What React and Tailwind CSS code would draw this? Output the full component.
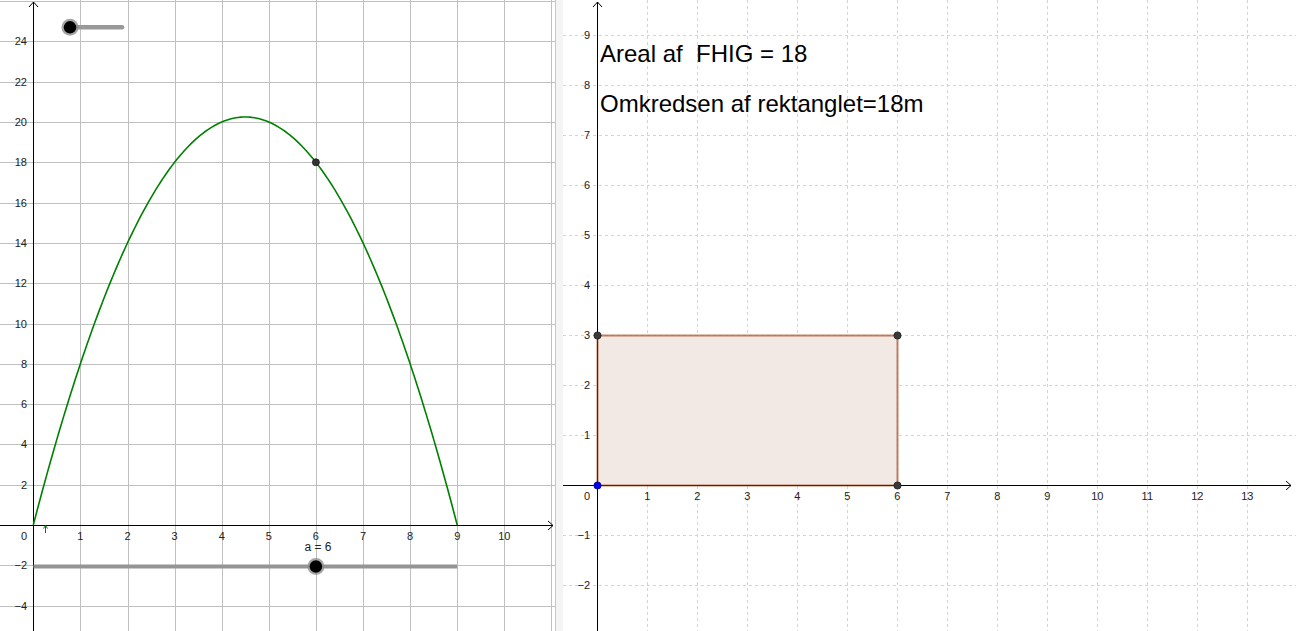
import React from 'react';

// left view: area function f(x) = x(9 - x)
const L = { ox: 33.3, oy: 525, ux: 47.1, uy: 20.15 };
// right view: rectangle
const R = { ox: 34.3, oy: 485, u: 50 };

const lx = (x) => L.ox + L.ux * x;
const ly = (y) => L.oy - L.uy * y;
const rx = (x) => R.ox + R.u * x;
const ry = (y) => R.oy - R.u * y;

const parabola = () => {
  const pts = [];
  for (let i = 0; i <= 180; i++) {
    const x = (9 * i) / 180;
    pts.push(`${lx(x).toFixed(2)},${ly(x * (9 - x)).toFixed(2)}`);
  }
  return 'M' + pts.join(' L');
};

const minus = (n) => (n < 0 ? '\u2212' + Math.abs(n) : String(n));

const LeftView = () => {
  const vx = [1, 2, 3, 4, 5, 6, 7, 8, 9, 10, 11];
  const hy = [-4, -2, 2, 4, 6, 8, 10, 12, 14, 16, 18, 20, 22, 24, 26];
  return (
    <svg width="555" height="631" className="block">
      {vx.map((k) => (
        <line key={'v' + k} x1={Math.round(lx(k)) + 0.5} x2={Math.round(lx(k)) + 0.5} y1="0" y2="631" stroke="#c0c0c0" strokeWidth="1" />
      ))}
      {hy.map((k) => (
        <line key={'h' + k} x1="0" x2="555" y1={Math.round(ly(k)) + 0.5} y2={Math.round(ly(k)) + 0.5} stroke="#c0c0c0" strokeWidth="1" />
      ))}

      {/* axes */}
      <line x1="33.5" x2="33.5" y1="2" y2="631" stroke="#000" strokeWidth="1" />
      <polyline points="29,7 33.5,2 38,7" fill="none" stroke="#000" strokeWidth="1" />
      <line x1="0" x2="553" y1="525.5" y2="525.5" stroke="#000" strokeWidth="1" />
      <polyline points="548,521 553,525.5 548,530" fill="none" stroke="#000" strokeWidth="1" />

      {/* labels */}
      <g fontSize="11" fill="#222">
        {[1, 2, 3, 4, 5, 6, 7, 8, 9, 10].map((k) => (
          <text key={'xl' + k} x={lx(k)} y="539.5" textAnchor="middle">{k}</text>
        ))}
        <text x="27" y="539.5" textAnchor="end">0</text>
        {hy.filter((k) => k !== 26).map((k) => (
          <text key={'yl' + k} x="27" y={ly(k) + 4} textAnchor="end">{minus(k)}</text>
        ))}
      </g>

      {/* graph */}
      <path d={parabola()} fill="none" stroke="#008000" strokeWidth="1.6" />
      <line x1="45.5" x2="45.5" y1="533" y2="526" stroke="#008000" strokeWidth="1" />
      <polyline points="43.5,528.5 45.5,525.5 47.5,528.5" fill="none" stroke="#008000" strokeWidth="1" />
      <circle cx={lx(6)} cy={ly(18)} r="3.5" fill="#333" stroke="#1a1a1a" strokeWidth="0.8" />

      {/* top slider */}
      <line x1="70" x2="122" y1="27.3" y2="27.3" stroke="#999" strokeWidth="4.5" strokeLinecap="round" />
      <circle cx="70" cy="27.3" r="8.5" fill="#888" opacity="0.75" />
      <circle cx="70" cy="27.3" r="6.2" fill="#000" />

      {/* bottom slider a */}
      <line x1="33.5" x2={lx(9)} y1="566.5" y2="566.5" stroke="#959595" strokeWidth="4" />
      <text x={lx(6) + 2} y="550.5" fontSize="12" fill="#222" textAnchor="middle">a = 6</text>
      <circle cx={lx(6)} cy="566.5" r="8.5" fill="#888" opacity="0.75" />
      <circle cx={lx(6)} cy="566.5" r="6.2" fill="#000" />
    </svg>
  );
};

const RightView = () => {
  const vx = [1, 2, 3, 4, 5, 6, 7, 8, 9, 10, 11, 12, 13];
  const hy = [-2, -1, 1, 2, 3, 4, 5, 6, 7, 8, 9];
  return (
    <svg width="733" height="631" className="block">
      {vx.map((k) => (
        <line key={'v' + k} x1={Math.round(rx(k)) + 0.5} x2={Math.round(rx(k)) + 0.5} y1="0" y2="631" stroke="#d4d4d4" strokeWidth="1" strokeDasharray="3,3" />
      ))}
      {hy.map((k) => (
        <line key={'h' + k} x1="0" x2="733" y1={ry(k) + 0.5} y2={ry(k) + 0.5} stroke="#d4d4d4" strokeWidth="1" strokeDasharray="3,3" />
      ))}

      {/* rectangle FHIG */}
      <rect x="34.5" y="335.5" width="300" height="150" fill="#f3e9e4" />

      {/* axes */}
      <line x1="34.5" x2="34.5" y1="2" y2="631" stroke="#000" strokeWidth="1" />
      <polyline points="30,7 34.5,2 39,7" fill="none" stroke="#000" strokeWidth="1" />
      <line x1="0" x2="728" y1="485.5" y2="485.5" stroke="#000" strokeWidth="1" />
      <polyline points="723,481 728,485.5 723,490" fill="none" stroke="#000" strokeWidth="1" />

      <rect x="34.5" y="335.5" width="300" height="150" fill="none" stroke="#993300" strokeOpacity="0.6" strokeWidth="2" />

      {/* labels */}
      <g fontSize="11" fill="#222">
        {vx.map((k) => (
          <text key={'xl' + k} x={rx(k)} y="499.5" textAnchor="middle">{k}</text>
        ))}
        <text x="27" y="499.5" textAnchor="end">0</text>
        {hy.map((k) => (
          <text key={'yl' + k} x="27" y={ry(k) + 4} textAnchor="end">{minus(k)}</text>
        ))}
      </g>

      {/* points */}
      <circle cx="34.5" cy="335.5" r="3.6" fill="#3a3a3a" stroke="#1a1a1a" strokeWidth="0.8" />
      <circle cx="334.5" cy="335.5" r="3.6" fill="#3a3a3a" stroke="#1a1a1a" strokeWidth="0.8" />
      <circle cx="334.5" cy="485.5" r="3.6" fill="#3a3a3a" stroke="#1a1a1a" strokeWidth="0.8" />
      <circle cx="34.5" cy="485.5" r="3.6" fill="#0000ff" stroke="#00008a" strokeWidth="0.8" />

      {/* texts */}
      <text x="37" y="62" fontSize="24" fill="#000" style={{ whiteSpace: 'pre' }}>Areal af  FHIG = 18</text>
      <text x="37" y="112" fontSize="24" fill="#000">Omkredsen af rektanglet=18m</text>
    </svg>
  );
};

export default function App() {
  return (
    <div className="flex h-[631px] w-[1296px] overflow-hidden bg-white font-['Liberation_Sans',Arial,sans-serif]">
      <div className="w-[555px] shrink-0">
        <LeftView />
      </div>
      <div className="w-[8px] shrink-0 border-l border-[#c6c6c6] bg-[#f4f4f4]" />
      <div className="flex-1">
        <RightView />
      </div>
    </div>
  );
}
